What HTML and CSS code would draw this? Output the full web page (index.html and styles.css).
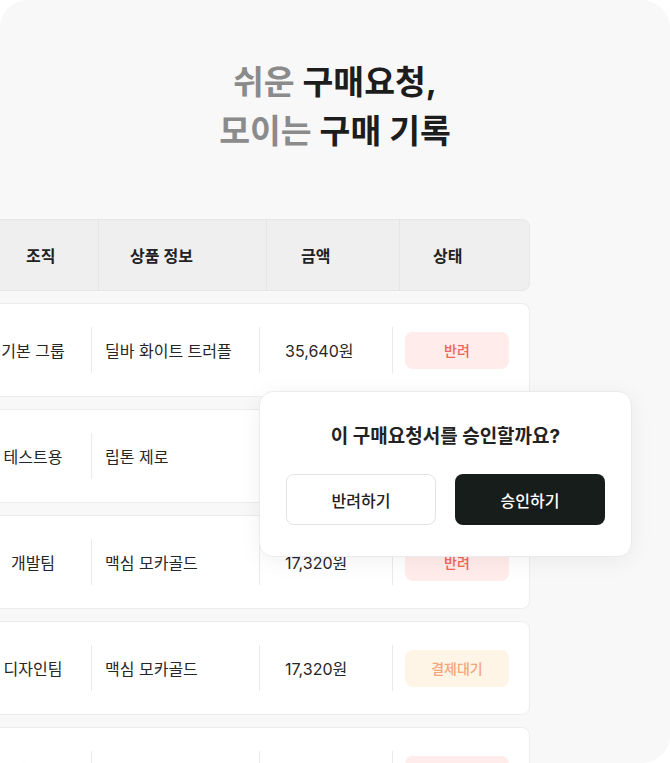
FILE: index.html
```html
<!DOCTYPE html>
<html>
	<head>
		<meta charset="utf-8" />
		<title>구매요청</title>
		<link rel="stylesheet" href="styles.css">
	</head>
	<body>
		<div class="frame">
			<div class="title">
				<p><span class="dim">쉬운</span> 구매요청,</p>
				<p><span class="dim">모이는</span> 구매 기록</p>
			</div>

			<div class="table">
				<div class="head">
					<div class="h1">조직</div>
					<div class="h2">상품 정보</div>
					<div class="h3">금액</div>
					<div class="h4">상태</div>
				</div>
				<div class="row">
					<div class="c1">기본 그룹</div>
					<div class="c2">딜바 화이트 트러플</div>
					<div class="c3">35,640원</div>
					<div class="c4"><span class="badge reject">반려</span></div>
				</div>
				<div class="row">
					<div class="c1">테스트용</div>
					<div class="c2">립톤 제로</div>
					<div class="c3">12,900원</div>
					<div class="c4"><span class="badge wait">결제대기</span></div>
				</div>
				<div class="row">
					<div class="c1">개발팀</div>
					<div class="c2">맥심 모카골드</div>
					<div class="c3">17,320원</div>
					<div class="c4"><span class="badge reject">반려</span></div>
				</div>
				<div class="row">
					<div class="c1">디자인팀</div>
					<div class="c2">맥심 모카골드</div>
					<div class="c3">17,320원</div>
					<div class="c4"><span class="badge wait">결제대기</span></div>
				</div>
				<!-- 마지막 줄은 아래로 잘려서 글자가 안 보임 -->
				<div class="row">
					<div class="c1"></div>
					<div class="c2"></div>
					<div class="c3"></div>
					<div class="c4"><span class="badge reject"></span></div>
				</div>
			</div>

			<div class="popup">
				<p class="popup-title">이 구매요청서를 승인할까요?</p>
				<div class="popup-buttons">
					<a href="javascript:;" class="btn btn-line">반려하기</a>
					<a href="javascript:;" class="btn btn-dark">승인하기</a>
				</div>
			</div>
		</div>
	</body>
</html>
```

FILE: styles.css
```css
*{
	margin:0;
	padding:0;
	box-sizing:border-box;
	text-decoration:none;
}
body{
	background:#fff;
	font-family:Inter, "Noto Sans CJK KR", sans-serif;
	color:#222;
}
.frame{
	width:670px;
	height:763px;
	background:#f8f8f8;
	border-radius:28px;
	overflow:hidden;
	position:relative;
}
.title{
	padding-top:58px;
	text-align:center;
	font-size:33.5px;
	font-weight:700;
	line-height:49px;
	color:#1d1d1d;
}
.title .dim{
	color:#8b8b8b;
}

.table{
	margin-left:-27px;
	margin-top:63px;
	width:557px;
	display:flex;
	flex-direction:column;
	gap:12px;
}
.head{
	display:flex;
	height:72px;
	background:#efefef;
	border:1px solid #e6e6e6;
	border-radius:8px;
	font-size:16px;
	font-weight:600;
}
.head div{
	display:flex;
	align-items:center;
	border-right:1px solid #e5e5e5;
}
.head .h1{ width:125px; padding-left:52px; }
.head .h2{ width:168px; padding-left:31px; }
.head .h3{ width:133px; padding-left:34px; }
.head .h4{ flex:1; padding-left:33px; border-right:none; }

.row{
	display:flex;
	align-items:center;
	height:94px;
	flex-shrink:0;
	background:#fff;
	border:1px solid #ececec;
	border-radius:8px;
	font-size:16px;
	color:#262626;
}
.row div{
	display:flex;
	align-items:center;
	height:46px;
	border-right:1px solid #eaeaea;
}
.row .c1{ width:118px; justify-content:center; padding-left:1px; }
.row .c2{ width:168px; padding-left:13px; }
.row .c3{ width:133px; padding-left:25px; }
.row .c4{ flex:1; padding-left:12px; border-right:none; }

.badge{
	display:flex;
	align-items:center;
	justify-content:center;
	width:104px;
	height:37px;
	border-radius:8px;
	font-size:14px;
	font-weight:500;
}
.reject{
	background:#ffeceb;
	color:#f1645b;
}
.wait{
	background:#fff5e7;
	color:#f6a47c;
}

.popup{
	position:absolute;
	left:259px;
	top:391px;
	width:373px;
	height:166px;
	padding:31px 26px 0;
	background:#fff;
	border:1px solid #ebebeb;
	border-radius:14px;
	box-shadow:0 4px 24px rgba(0,0,0,0.06);
}
.popup-title{
	text-align:center;
	font-size:19px;
	font-weight:700;
	line-height:28px;
	color:#222;
}
.popup-buttons{
	display:flex;
	gap:19px;
	margin-top:23px;
}
.btn{
	display:flex;
	align-items:center;
	justify-content:center;
	width:151px;
	height:51px;
	border-radius:8px;
	font-size:16px;
	font-weight:500;
}
.btn-line{
	background:#fff;
	border:1px solid #e3e3e3;
	color:#222;
}
.btn-dark{
	background:#171d1b;
	color:#fff;
}
```
